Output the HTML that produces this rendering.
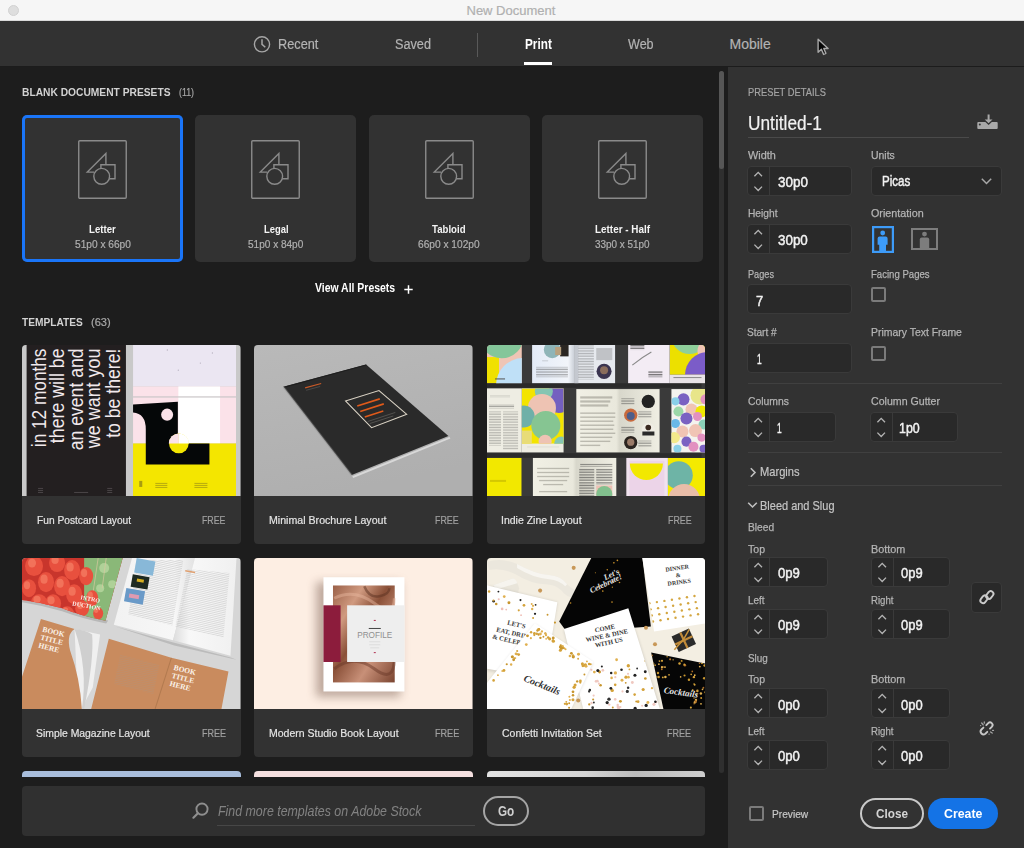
<!DOCTYPE html>
<html><head><meta charset="utf-8">
<style>
*{margin:0;padding:0;box-sizing:border-box}
html,body{width:1024px;height:848px;overflow:hidden;background:#1d1d1d;font-family:"Liberation Sans",sans-serif;position:relative}
.a{position:absolute}
.t{position:absolute;white-space:nowrap;transform-origin:0 0}
.pc{position:absolute;top:115px;width:161px;height:147px;background:#323232;border-radius:5px}
.pc.sel{box-shadow:inset 0 0 0 3px #1a75f8}
.tc{position:absolute;width:218.5px;height:199px;background:#323232;border-radius:4px;overflow:hidden}
.tc svg{position:absolute;left:0;top:0}
.in{position:absolute;height:30px;background:#292929;border:1px solid #3a3a3a;border-radius:4px}
.sp{position:absolute;left:0;top:0;bottom:0;width:23px;border-right:1px solid #3a3a3a;border-radius:4px 0 0 4px}
.sp svg{position:absolute;left:0;top:0}
.cb{position:absolute;width:15px;height:15px;border:2px solid #7b7b7b;border-radius:2px}
.hr{position:absolute;left:748px;width:254px;height:1px;background:#404040}
</style></head><body>
<!-- title bar -->
<div class="a" style="left:0;top:0;width:1024px;height:21px;background:#f6f6f6;border-bottom:1px solid #dadada"></div>
<div class="a" style="left:7.8px;top:5px;width:11px;height:11px;border-radius:50%;background:#dedede;border:1px solid #d2d2d2"></div>
<!-- nav -->
<div class="a" style="left:0;top:21px;width:1024px;height:45px;background:#323232"></div>
<svg class="a" style="left:253px;top:35px" width="18" height="18" viewBox="0 0 18 18"><circle cx="9" cy="9.3" r="7.6" fill="none" stroke="#a6a6a6" stroke-width="1.4"/><path d="M9 4.2V9.4L12.3 12.3" fill="none" stroke="#a6a6a6" stroke-width="1.5"/></svg>
<div class="a" style="left:477px;top:33px;width:1px;height:24px;background:#595959"></div>
<div class="a" style="left:524px;top:62px;width:28px;height:3px;background:#fff"></div>
<svg class="a" style="left:815px;top:37px" width="16" height="22" viewBox="0 0 16 22"><path d="M3.1 2.2V15.3L6.4 12.3L8.6 17.4L10.9 16.4L8.8 11.5H13.1Z" fill="#050505" stroke="#a8a8a8" stroke-width="1.4" stroke-linejoin="round"/></svg>

<!-- left content: presets -->
<div class="pc sel" style="left:22px"><svg class="a" width="51" height="61" viewBox="0 0 51 61" style="left:55px;top:24px"><g fill="none" stroke="#8a8a8a" stroke-width="1.4"><rect x="1.75" y="1.75" width="47.5" height="57.5" rx="1"/><path d="M28.9 25.7V14.5L10.3 33.1H17.2M23.9 29.6V25.7H38V39.8H32.2"/><circle cx="24.7" cy="37.3" r="7.9"/></g></svg></div>
<div class="pc" style="left:195px"><svg class="a" width="51" height="61" viewBox="0 0 51 61" style="left:55px;top:24px"><g fill="none" stroke="#8a8a8a" stroke-width="1.4"><rect x="1.75" y="1.75" width="47.5" height="57.5" rx="1"/><path d="M28.9 25.7V14.5L10.3 33.1H17.2M23.9 29.6V25.7H38V39.8H32.2"/><circle cx="24.7" cy="37.3" r="7.9"/></g></svg></div>
<div class="pc" style="left:368.5px"><svg class="a" width="51" height="61" viewBox="0 0 51 61" style="left:55px;top:24px"><g fill="none" stroke="#8a8a8a" stroke-width="1.4"><rect x="1.75" y="1.75" width="47.5" height="57.5" rx="1"/><path d="M28.9 25.7V14.5L10.3 33.1H17.2M23.9 29.6V25.7H38V39.8H32.2"/><circle cx="24.7" cy="37.3" r="7.9"/></g></svg></div>
<div class="pc" style="left:542px"><svg class="a" width="51" height="61" viewBox="0 0 51 61" style="left:55px;top:24px"><g fill="none" stroke="#8a8a8a" stroke-width="1.4"><rect x="1.75" y="1.75" width="47.5" height="57.5" rx="1"/><path d="M28.9 25.7V14.5L10.3 33.1H17.2M23.9 29.6V25.7H38V39.8H32.2"/><circle cx="24.7" cy="37.3" r="7.9"/></g></svg></div>
<svg class="a" style="left:403.5px;top:284.5px" width="9" height="9" viewBox="0 0 9 9"><path d="M4.5 0.3V8.7M0.3 4.5H8.7" stroke="#fff" stroke-width="1.5"/></svg>

<!-- templates -->
<div class="tc" style="left:22px;top:345px"><svg width="218.5" height="151" viewBox="0 0 218 150" preserveAspectRatio="none">
<rect width="218" height="150" fill="#c9c9c9"/>
<rect x="4.6" y="0" width="99.1" height="150" fill="#231f20"/>
<g font-family="Liberation Sans" font-size="19.5" fill="#f1e9ec" text-anchor="end">
<text transform="translate(23.5,3.5) rotate(-90)" textLength="98" lengthAdjust="spacingAndGlyphs">in 12 months</text>
<text transform="translate(42.3,3.5) rotate(-90)" textLength="94" lengthAdjust="spacingAndGlyphs">there will be</text>
<text transform="translate(61.2,3.5) rotate(-90)" textLength="101" lengthAdjust="spacingAndGlyphs">an event and</text>
<text transform="translate(77.6,3.5) rotate(-90)" textLength="99" lengthAdjust="spacingAndGlyphs">we want you</text>
<text transform="translate(98,3.5) rotate(-90)" textLength="88.7" lengthAdjust="spacingAndGlyphs">to be there!</text>
</g>
<g fill="#5a5557"><rect x="16" y="142" width="5" height=".7"/><rect x="16" y="144" width="5" height=".7"/><rect x="16" y="146" width="5" height=".7"/><rect x="52" y="146" width="14" height=".7"/><rect x="85" y="142" width="5" height=".7"/><rect x="85" y="144" width="5" height=".7"/><rect x="85" y="146" width="5" height=".7"/></g>
<rect x="110.8" y="0" width="102.7" height="41.2" fill="#ebe6f2"/>
<rect x="110.8" y="41.2" width="102.7" height="56.6" fill="#fbe2e9"/>
<rect x="156" y="41.2" width="41.6" height="56.6" fill="#ffffff"/>
<rect x="110.8" y="51" width="102.7" height="1.2" fill="#cbc6c8"/>
<rect x="110.8" y="97.8" width="102.7" height="52.2" fill="#f4e600"/>
<path d="M110.8 59.2L155.5 56.3V97.8H187V118.6H123.5V83.7Q123.5 68 110.8 67Z" fill="#050708"/>
<circle cx="156.5" cy="97.8" r="9.8" fill="#f4e600"/>
<path d="M146.5 97.9A10 10 0 0 1 156.5 87.8V97.9Z" fill="#fbe2e9"/>
<path d="M156.5 87.8A10 10 0 0 1 166.5 97.9H156.5Z" fill="#ffffff"/>
<circle cx="144.8" cy="69.2" r="6" fill="#fbe2e9"/>
<g fill="#a89c10"><rect x="117" y="135" width="3" height="6"/><rect x="133" y="137" width="12" height=".8"/><rect x="133" y="139" width="12" height=".8"/><rect x="133" y="141" width="12" height=".8"/><rect x="172" y="137" width="13" height=".8"/><rect x="172" y="139" width="13" height=".8"/><rect x="172" y="141" width="13" height=".8"/></g>
<g fill="#b9b4c2"><circle cx="178" cy="18" r=".7"/><circle cx="156" cy="25" r=".7"/><circle cx="190" cy="8" r=".7"/><circle cx="145" cy="5" r=".7"/></g>
</svg>
</div>
<div class="tc" style="left:254.3px;top:345px"><svg width="218.5" height="151" viewBox="0 0 218 150" preserveAspectRatio="none">
<defs><linearGradient id="g2" x1="0" y1="0" x2="0.3" y2="1"><stop offset="0" stop-color="#b9b9b9"/><stop offset="1" stop-color="#afafaf"/></linearGradient></defs>
<rect width="218" height="150" fill="url(#g2)"/>
<path d="M98 130.5L195 91.5L196 93L99 132Z" fill="#d8d8d8"/>
<path d="M29.4 41.5L111.8 19.3L194 90.3L97.5 129.2Z" fill="#2a2a2a"/>
<path d="M29.4 41.5L111.8 19.3L112.5 20L30.5 42.5Z" fill="#1e1e1e"/>
<path d="M91.3 55.6L124.7 45.2L152.4 68.8L117.3 82.1Z" fill="none" stroke="#d9d2c4" stroke-width="1"/>
<g stroke="#e05a1a" stroke-width="1.6" fill="none">
<path d="M103 60.5L125.5 53.5"/>
<path d="M106 66L129.5 58.5"/>
<path d="M110.5 71.5L129 65.5"/>
</g>
<g stroke="#5d5b58" stroke-width=".8"><path d="M113.5 76L141 67"/><path d="M115.5 78L139 70.5"/></g>
<path d="M51 42.6L67 38.2" stroke="#c85a28" stroke-width="1.1"/><path d="M29.4 41.5L97.5 129.2" stroke="#8a8a8a" stroke-width="2" opacity=".35"/>
<path d="M52 45L66 41.2" stroke="#555" stroke-width=".7"/>
</svg>
</div>
<div class="tc" style="left:486.8px;top:345px"><svg width="218.5" height="151" viewBox="0 0 218 150" preserveAspectRatio="none">
<defs>
<clipPath id="cA"><rect x="0" y="0" width="34.7" height="37.9"/></clipPath>
<clipPath id="cC"><rect x="182.3" y="0" width="36" height="29.5"/></clipPath>
<clipPath id="cD"><rect x="34.7" y="43.1" width="41.7" height="55"/></clipPath>
<clipPath id="cF"><rect x="184" y="43.8" width="34" height="62.9"/></clipPath>
<clipPath id="cI"><rect x="180.5" y="112.2" width="38" height="38"/></clipPath>
<pattern id="p3t" width="2" height="1.6" patternUnits="userSpaceOnUse"><rect width="2" height=".75" fill="#3a3a3a"/></pattern>
<linearGradient id="gB" x1="0" x2="1"><stop offset="0" stop-color="#e3ebf7"/><stop offset=".85" stop-color="#f2f5fa"/><stop offset="1" stop-color="#c9ced6"/></linearGradient>
<linearGradient id="gE" x1="0" x2="1"><stop offset="0" stop-color="#f1f0e5"/><stop offset=".48" stop-color="#e9e8dc"/><stop offset=".52" stop-color="#d8d7cb"/><stop offset="1" stop-color="#efeee3"/></linearGradient>
</defs>
<rect width="218" height="150" fill="#3a3a3a"/>
<rect x="0" y="38" width="214" height="4.5" fill="#2a2a2a"/>
<rect x="0" y="107.5" width="214" height="4.5" fill="#2c2c2c"/>
<!-- A -->
<g clip-path="url(#cA)"><rect width="35" height="38" fill="#efc5b5"/><rect x="0" y="12" width="12" height="26" fill="#f0e100"/><circle cx="14.6" cy="-8.8" r="22" fill="#84c69a"/><circle cx="36" cy="40" r="27" fill="#bfe0f7"/></g>
<rect x="8" y="33.2" width="10" height="1" fill="#555"/>
<!-- B -->
<rect x="45" y="0" width="42.2" height="37.9" fill="url(#gB)"/>
<rect x="87.2" y="0" width="40.6" height="37.9" fill="#e6e9ee"/>
<rect x="87.2" y="0" width="4" height="37.9" fill="#c4c8cf"/>
<circle cx="65.1" cy="4.8" r="8.4" fill="#8fb5b8"/>
<rect x="73" y="0" width="8.4" height="11.3" fill="#2a2622"/>
<rect x="68" y="2" width="6" height="8" fill="#b9a17e"/>
<g fill="url(#p3t)" opacity=".6"><rect x="49" y="21.7" width="31.7" height="10.3" opacity=".75"/><rect x="91" y="0.3" width="15.6" height="34" opacity=".55"/><rect x="55" y="15" width="6" height="1"/></g>
<circle cx="116.8" cy="26.2" r="7.5" fill="#3b3550"/><circle cx="116.8" cy="25" r="4" fill="#8a6d5c"/>
<rect x="109" y="3" width="16" height="12" fill="#6a6a6a" opacity=".3"/>
<!-- C -->
<rect x="140.8" y="0" width="41.5" height="37.9" fill="#f3ecf4"/>
<g clip-path="url(#cC)"><rect x="182.3" y="0" width="36" height="30" fill="#ece000"/><circle cx="202" cy="-9" r="18" fill="#8fcf9a"/><circle cx="222" cy="6" r="12" fill="#f0c4b4"/><circle cx="220.5" cy="30" r="23" fill="#7b5cc8"/></g>
<rect x="182.3" y="29.5" width="36" height="8.4" fill="#e8e2e6"/>
<g fill="url(#p3t)" opacity=".8"><rect x="143" y="0" width="14" height="5"/><rect x="161" y="26" width="14" height="6"/><rect x="186" y="32" width="28" height="1.2"/></g>
<path d="M145 20Q155 12 164 7" stroke="#8a8a8a" stroke-width="1.2" fill="none"/>
<!-- D -->
<rect x="0" y="43.1" width="34.7" height="63.6" fill="#eeede3"/>
<rect x="34.7" y="43.1" width="41.7" height="63.6" fill="#eeede3"/>
<g clip-path="url(#cD)"><rect x="34.7" y="43.1" width="42" height="55" fill="#f3e400"/><circle cx="71.6" cy="53.5" r="14" fill="#7460c0"/><circle cx="56.7" cy="46.3" r="9" fill="#85c5b2"/><circle cx="54.8" cy="62.6" r="14" fill="#eec3b3"/><circle cx="36.6" cy="71" r="11" fill="#6fb0a8"/><rect x="34.7" y="85" width="10" height="14" fill="#e8dc78"/><circle cx="58.7" cy="80" r="14.5" fill="#86c592"/><circle cx="58" cy="95.6" r="6.5" fill="#eec3b3"/><circle cx="74" cy="98" r="7" fill="#85c5b2"/></g>
<g fill="url(#p3t)" opacity=".6"><rect x="2" y="59" width="25" height="4" opacity=".8"/><rect x="2" y="66" width="12" height="34" opacity=".55"/><rect x="16" y="66" width="15" height="38" opacity=".5"/><rect x="3" y="50" width="20" height="2.5" opacity=".35"/><rect x="40" y="101" width="32" height="1" opacity=".5"/></g>
<!-- E -->
<rect x="89.1" y="43.8" width="83.1" height="62.9" fill="url(#gE)"/>
<g fill="#8a887e" opacity=".5"><rect x="93" y="51" width="32" height="2.2"/><rect x="93" y="55" width="30" height="2.2"/><rect x="93" y="59" width="28" height="2.2"/><rect x="93" y="67" width="35" height="1.4"/><rect x="93" y="71" width="35" height="1.4"/><rect x="93" y="75" width="33" height="1.4"/><rect x="93" y="79" width="34" height="1.4"/><rect x="93" y="83" width="33" height="1.4"/><rect x="93" y="87" width="35" height="1.4"/><rect x="93" y="91" width="32" height="1.4"/><rect x="93" y="95" width="30" height="1.4"/><rect x="93" y="99" width="20" height="1.4"/></g>
<g fill="url(#p3t)" opacity=".5"><rect x="134" y="53" width="13" height="6"/><rect x="151" y="66" width="13" height="6"/><rect x="134" y="81" width="13" height="6"/><rect x="151" y="95" width="13" height="6"/></g>
<circle cx="160.9" cy="56.1" r="6.6" fill="#222"/><circle cx="143.4" cy="69.7" r="6.6" fill="#c76a3e"/><circle cx="143.4" cy="70.5" r="4" fill="#4d5d8a"/><circle cx="160.9" cy="84" r="6.6" fill="#efede4"/><path d="M155 86h12v4h-12z" fill="#2a2a2a"/><circle cx="160.9" cy="82" r="2.8" fill="#3a2a20"/><circle cx="143.4" cy="96.9" r="6.6" fill="#2b2420"/><circle cx="143.4" cy="96.5" r="3.6" fill="#9a7a68"/>
<!-- F -->
<rect x="184" y="43.8" width="34" height="62.9" fill="#f4f3ee"/>
<g clip-path="url(#cF)">
<circle cx="212" cy="50" r="9" fill="#e8e58a"/><circle cx="196" cy="54" r="6" fill="#7a62c2"/><circle cx="218" cy="54" r="5" fill="#e290c0"/><circle cx="188" cy="56" r="4" fill="#8ad0e8"/>
<circle cx="204" cy="64" r="6" fill="#f0c4b4"/><circle cx="214" cy="66" r="6" fill="#f0e800"/><circle cx="191" cy="66" r="5" fill="#9cd8a8"/>
<circle cx="199" cy="73" r="6" fill="#7a62c2"/><circle cx="210" cy="71" r="4.5" fill="#e290c0"/><circle cx="188" cy="78" r="4.5" fill="#6ab8e8"/><circle cx="216" cy="79" r="5" fill="#8ad0b8"/>
<circle cx="195" cy="86" r="6" fill="#f0c4b4"/><circle cx="208" cy="85" r="6.5" fill="#f0c4b4"/><circle cx="187" cy="92" r="5.5" fill="#f3e98a"/><circle cx="214" cy="92" r="4" fill="#e290c0"/>
<circle cx="199" cy="96" r="5" fill="#7a62c2"/><circle cx="206" cy="101" r="5" fill="#e290c0"/><circle cx="190" cy="103" r="4" fill="#8ad0e8"/><circle cx="216" cy="103" r="4" fill="#7a62c2"/>
</g>
<!-- G -->
<rect x="0" y="112.2" width="34.4" height="38" fill="#f2e800"/>
<rect x="3" y="134" width="16" height="2" fill="#d4c800"/>
<!-- H -->
<rect x="45.8" y="112.2" width="83.2" height="38" fill="url(#gE)"/>
<g fill="#8a887e" opacity=".5"><rect x="50" y="122" width="32" height="1.3"/><rect x="50" y="126" width="32" height="1.3"/><rect x="50" y="130" width="32" height="1.3"/><rect x="52" y="134" width="28" height="1.3"/><rect x="56" y="138" width="20" height="1.3"/><rect x="52" y="145" width="28" height="1.3"/></g>
<g fill="url(#p3t)" opacity=".6"><rect x="93" y="118" width="32" height="3"/><rect x="92" y="123" width="15" height="27"/><rect x="109" y="123" width="16" height="16"/></g>
<rect x="109" y="139.5" width="16" height="11" fill="#ecc0b4"/><circle cx="117" cy="148" r="8" fill="#82c08e"/>
<!-- I -->
<rect x="139" y="112.2" width="41.5" height="38" fill="#f0e2ee"/>
<rect x="142" y="115" width="35" height="35" fill="#ecd4e8"/>
<path d="M142.5 117.6H175.5A16.5 16.5 0 0 1 142.5 117.6Z" fill="#f2e800"/>
<g clip-path="url(#cI)"><rect x="180.5" y="112.2" width="38" height="38" fill="#f4ea00"/><circle cx="191.3" cy="129.4" r="14" fill="#6eb4a6"/><circle cx="196.6" cy="154" r="16" fill="#e9bda8"/></g>
</svg>
</div>
<div class="tc" style="left:22px;top:558px"><svg width="218.5" height="151" viewBox="0 0 218 150" preserveAspectRatio="none">
<defs>
<clipPath id="c4s"><path d="M0 0H100.5L83.3 62.4Q60 58 40 50Q20 44 0 41.6Z"/></clipPath>
<linearGradient id="g4l" x1="0" x2="1"><stop offset="0" stop-color="#f2f2f2"/><stop offset=".75" stop-color="#f7f7f7"/><stop offset="1" stop-color="#e2e2e2"/></linearGradient><linearGradient id="g4r" x1="0" x2="1"><stop offset="0" stop-color="#dcdcdc"/><stop offset=".25" stop-color="#f8f8f8"/><stop offset="1" stop-color="#f0f0f0"/></linearGradient><pattern id="p4t" width="3" height="1.8" patternUnits="userSpaceOnUse" patternTransform="rotate(12)"><rect width="3" height=".8" fill="#9a9a9a"/></pattern>
</defs>
<rect width="218" height="150" fill="#d6d6d6"/>
<!-- strawberries -->
<path d="M0 44Q20 47 40 53Q62 61 84 65L86 62Q60 58 40 50Q20 44 0 41.6Z" fill="#b8b8b8"/>
<g clip-path="url(#c4s)">
<rect width="101" height="63" fill="#c8352c"/>
<path d="M62 0H101L84 63L62 60Z" fill="#8ab878"/>
<g fill="#b8d8a0" opacity=".8"><circle cx="82" cy="10" r="5"/><circle cx="90" cy="26" r="4"/><circle cx="78" cy="30" r="4"/></g>
<path d="M76 0L70 40M84 0L80 30" stroke="#d8c8a0" stroke-width="1" opacity=".7"/>
<ellipse cx="12" cy="8" rx="9" ry="10" fill="#e8503e"/><ellipse cx="10" cy="5" rx="4.0" ry="4.5" fill="#f47a62" opacity=".8"/><ellipse cx="35" cy="5" rx="8" ry="9" fill="#e8503e"/><ellipse cx="33" cy="2" rx="3.6" ry="4.0" fill="#f47a62" opacity=".8"/><ellipse cx="50" cy="12" rx="8" ry="10" fill="#e8503e"/><ellipse cx="48" cy="9" rx="3.6" ry="4.5" fill="#f47a62" opacity=".8"/><ellipse cx="64" cy="18" rx="7" ry="9" fill="#e8503e"/><ellipse cx="62" cy="15" rx="3.1" ry="4.0" fill="#f47a62" opacity=".8"/><ellipse cx="24" cy="24" rx="8" ry="10" fill="#e8503e"/><ellipse cx="22" cy="21" rx="3.6" ry="4.5" fill="#f47a62" opacity=".8"/><ellipse cx="40" cy="28" rx="8" ry="10" fill="#e8503e"/><ellipse cx="38" cy="25" rx="3.6" ry="4.5" fill="#f47a62" opacity=".8"/><ellipse cx="7" cy="30" rx="7" ry="9" fill="#e8503e"/><ellipse cx="5" cy="27" rx="3.1" ry="4.0" fill="#f47a62" opacity=".8"/><ellipse cx="17" cy="44" rx="8" ry="8" fill="#e8503e"/><ellipse cx="15" cy="41" rx="3.6" ry="3.6" fill="#f47a62" opacity=".8"/><ellipse cx="31" cy="45" rx="8" ry="9" fill="#e8503e"/><ellipse cx="29" cy="42" rx="3.6" ry="4.0" fill="#f47a62" opacity=".8"/><ellipse cx="52" cy="36" rx="8" ry="10" fill="#e8503e"/><ellipse cx="50" cy="33" rx="3.6" ry="4.5" fill="#f47a62" opacity=".8"/><ellipse cx="60" cy="50" rx="7" ry="8" fill="#e8503e"/><ellipse cx="58" cy="47" rx="3.1" ry="3.6" fill="#f47a62" opacity=".8"/><ellipse cx="45" cy="55" rx="7" ry="7" fill="#e8503e"/><ellipse cx="43" cy="52" rx="3.1" ry="3.1" fill="#f47a62" opacity=".8"/><ellipse cx="70" cy="40" rx="6" ry="8" fill="#e8503e"/><ellipse cx="68" cy="37" rx="2.7" ry="3.6" fill="#f47a62" opacity=".8"/><ellipse cx="76" cy="55" rx="5" ry="6" fill="#e8503e"/><ellipse cx="74" cy="52" rx="2.2" ry="2.7" fill="#f47a62" opacity=".8"/><ellipse cx="2" cy="48" rx="5" ry="6" fill="#e8503e"/><ellipse cx="0" cy="45" rx="2.2" ry="2.7" fill="#f47a62" opacity=".8"/>
<g font-family="Liberation Serif" font-weight="bold" font-size="6" fill="#fff" opacity=".9"><text x="58" y="41" transform="rotate(10 58 41)">INTRO</text><text x="50" y="47" transform="rotate(10 50 47)">DUCTION</text></g>
</g>
<!-- white magazine spread top right -->
<path d="M93 68L151 84L209 99L214 101L152 87Z" fill="#b4b4b4" opacity=".8"/>
<path d="M91.6 66.2L109.8 0H172.5L150.7 81.6Z" fill="url(#g4l)"/>
<path d="M172.5 0H214L208 97L150.7 81.6Z" fill="url(#g4r)"/>
<path d="M116 2L161 2L150 67L106 56Z" fill="url(#p4t)" opacity=".35"/>
<path d="M165 11L207 15L201 79L153 68Z" fill="url(#p4t)" opacity=".32"/>
<g transform="rotate(10 118 20)"><rect x="111" y="1" width="19" height="14.5" fill="#88b8d8"/><rect x="110" y="17.5" width="17" height="12.5" fill="#1e2a22"/><rect x="115" y="21" width="7" height="3" fill="#d8b020"/><rect x="106" y="32" width="19" height="13.5" fill="#6a9ac8"/><rect x="110" y="37" width="10" height="4" fill="#e09ab0"/></g>
<rect x="163" y="12" width="10" height="1.5" fill="#e0a070" transform="rotate(10 163 12)"/>
<!-- peeled page -->
<path d="M52.4 70.6L77.9 76L70.6 128.7Q64 140 60 150H56Z" fill="#f0f0f0"/>
<path d="M52.4 70.6Q64 72 70 76Q72 100 62 150H59.7Q66 110 52.4 70.6Z" fill="#cfcfcf"/>
<!-- tan cover bottom-left -->
<path d="M18.9 60.6L52.4 70.6Q44 76 48 92Q58 120 59.7 150H0V118Z" fill="#c98b5e"/>
<g font-family="Liberation Serif" font-weight="bold" font-size="7.5" fill="#fbf3ea"><text x="20" y="73" transform="rotate(14 20 73)">BOOK</text><text x="18" y="81" transform="rotate(14 18 81)">TITLE</text><text x="16" y="89" transform="rotate(14 16 89)">HERE</text></g>
<!-- tan spread bottom right -->
<path d="M86.6 80.2L149 99.2L206 112.8L199 150H69Z" fill="#c98b5e"/>
<path d="M149 99.2L132.8 150" stroke="#b27a50" stroke-width="1"/>
<path d="M98 96L137 106L131 135L92 125Z" fill="url(#p4t)" opacity=".25"/>
<g font-family="Liberation Serif" font-weight="bold" font-size="7.5" fill="#fbf3ea"><text x="151" y="111" transform="rotate(14 151 111)">BOOK</text><text x="149" y="119" transform="rotate(14 149 119)">TITLE</text><text x="147" y="127" transform="rotate(14 147 127)">HERE</text></g>
</svg>
</div>
<div class="tc" style="left:254.3px;top:558px"><svg width="218.5" height="151" viewBox="0 0 218 150" preserveAspectRatio="none">
<defs>
<filter id="f5" x="-50%" y="-50%" width="200%" height="200%"><feGaussianBlur stdDeviation="5"/></filter>
<linearGradient id="g5p" x1="0" y1="0" x2="1" y2="1"><stop offset="0" stop-color="#9a6048"/><stop offset=".25" stop-color="#d09a80"/><stop offset=".45" stop-color="#8a5038"/><stop offset=".7" stop-color="#c89078"/><stop offset="1" stop-color="#7a4430"/></linearGradient>
</defs>
<rect width="218" height="150" fill="#fdeee3"/>
<rect x="62" y="24" width="84" height="114" fill="#8a7064" opacity=".55" filter="url(#f5)"/>
<rect x="69.3" y="19.1" width="80.8" height="113.5" fill="#ffffff"/>
<rect x="78.8" y="27.3" width="61.6" height="96.3" fill="url(#g5p)"/>
<path d="M80 40Q100 30 120 45T140 40" stroke="#e8b8a0" stroke-width="3" fill="none" opacity=".45"/><path d="M110 28Q115 40 125 38T135 30" stroke="#5a3020" stroke-width="2.5" fill="none" opacity=".5"/>
<path d="M80 110Q100 95 120 110T140 100" stroke="#6a3828" stroke-width="3" fill="none" opacity=".5"/>
<rect x="69.3" y="47" width="17.1" height="56.3" fill="#8c1c3c"/>
<rect x="92.9" y="47" width="57.2" height="56.3" fill="#eeeeee"/>
<text x="120.5" y="79.6" font-family="Liberation Sans" font-size="8.5" fill="#909090" text-anchor="middle" textLength="35" lengthAdjust="spacingAndGlyphs">PROFILE</text>
<rect x="114.5" y="69.5" width="12" height="1" fill="#444"/>
<rect x="119.5" y="61.5" width="2" height="1" fill="#b03050"/>
<rect x="119.5" y="93.5" width="2" height="1" fill="#b03050"/>
<g fill="#d0d0d0"><rect x="115" y="83" width="11" height=".6"/><rect x="115" y="86" width="11" height=".6"/><rect x="116" y="89" width="9" height=".6"/></g>
</svg>
</div>
<div class="tc" style="left:486.8px;top:558px"><svg width="218.5" height="151" viewBox="0 0 218 150" preserveAspectRatio="none">
<defs><filter id="f6" x="-20%" y="-20%" width="140%" height="140%"><feGaussianBlur stdDeviation="1.5"/></filter>
<clipPath id="c6c"><path d="M76.8 70.6L141 49.8L172.5 150H96Z"/></clipPath><clipPath id="c6k"><path d="M47.7 64.7L106 103L84 150H0V124Z"/></clipPath><clipPath id="c6b"><path d="M163.8 93.8L219 105V150H176Z"/></clipPath><clipPath id="c6d"><path d="M155 0H218V65L166.7 72.9Z"/></clipPath></defs>
<rect width="218" height="150" fill="#f3eee2"/>
<path d="M0 4Q14 -1 30 6Q48 16 62 17Q74 18 80 26Q86 32 92 33L88 39Q80 40 74 32Q68 26 58 26Q44 26 28 16Q14 9 2 12Z" fill="#ebe7dd"/>
<path d="M30 6Q48 16 62 17Q74 18 80 26L78 28Q72 22 62 21Q46 20 30 10Z" fill="#f7f5f0"/>
<path d="M6 27L26 20Q30 22 32 30L30 40L12 46Q8 38 6 27Z" fill="#e9e5da"/>
<path d="M6 27L26 20Q30 22 30 25L10 31Z" fill="#f6f4ee"/>
<path d="M12 46L30 40L32 43L14 49Z" fill="#b8b2a4" opacity=".7"/>
<path d="M0 30L2.6 27.9L70.2 44L58 120L0 112Z" fill="#000" opacity=".12" filter="url(#f6)"/>
<path d="M0 27L2.6 27.9L70.2 44L58 120L0 110Z" fill="#ffffff"/>
<circle cx="2.1" cy="33.2" r="1.24" fill="#d4a23a"/><circle cx="44.6" cy="45.6" r="0.98" fill="#e0b050"/><circle cx="36.9" cy="47.0" r="1.36" fill="#d4a23a"/><circle cx="6.6" cy="42.9" r="1.25" fill="#222"/><circle cx="19.2" cy="51.2" r="0.90" fill="#f0c0b8"/><circle cx="21.9" cy="44.5" r="1.48" fill="#c8962e"/><circle cx="33.4" cy="41.8" r="1.05" fill="#222"/><circle cx="48.5" cy="46.5" r="0.91" fill="#222"/><circle cx="60.4" cy="56.3" r="0.95" fill="#c8962e"/><circle cx="46.0" cy="59.6" r="1.04" fill="#d4a23a"/><circle cx="47.9" cy="55.4" r="1.12" fill="#222"/><circle cx="15.1" cy="50.6" r="1.34" fill="#f0c0b8"/><circle cx="6.5" cy="42.2" r="1.02" fill="#c8962e"/><circle cx="17.2" cy="38.3" r="1.36" fill="#e0b050"/><circle cx="9.2" cy="45.6" r="1.27" fill="#c8962e"/><circle cx="34.0" cy="56.8" r="0.93" fill="#f0c0b8"/><circle cx="11.7" cy="41.0" r="1.03" fill="#f0c0b8"/><circle cx="11.4" cy="33.4" r="0.94" fill="#222"/><circle cx="31.7" cy="52.0" r="1.09" fill="#d4a23a"/><circle cx="67.8" cy="64.1" r="1.10" fill="#c8962e"/><circle cx="45.1" cy="50.6" r="1.18" fill="#e0b050"/><circle cx="45.9" cy="47.5" r="1.12" fill="#e0b050"/>
<g font-family="Liberation Serif" font-weight="bold" font-size="6.5" fill="#3a3a3a"><text x="20" y="66" transform="rotate(13 20 66)">LET'S</text><text x="9" y="73" transform="rotate(13 9 73)">EAT, DRINK</text><text x="5" y="80" transform="rotate(13 5 80)">&amp; CELEBR</text></g>
<path d="M72 63L104 0H155L163.5 68L80 74Z" fill="#050505"/>
<circle cx="124.7" cy="43.8" r="0.81" fill="#c8902a"/><circle cx="108.1" cy="14.7" r="0.50" fill="#c8902a"/><circle cx="125.1" cy="29.0" r="0.64" fill="#c8902a"/><circle cx="125.2" cy="23.3" r="0.87" fill="#c8902a"/><circle cx="131.3" cy="13.9" r="0.86" fill="#c8902a"/><circle cx="113.1" cy="27.5" r="0.66" fill="#c8902a"/><circle cx="126.6" cy="4.8" r="0.81" fill="#c8902a"/><circle cx="110.9" cy="28.4" r="0.88" fill="#c8902a"/><circle cx="120.0" cy="11.6" r="0.74" fill="#c8902a"/><circle cx="115.5" cy="32.8" r="0.83" fill="#c8902a"/><circle cx="122.2" cy="16.9" r="0.62" fill="#c8902a"/><circle cx="83.4" cy="44.7" r="0.81" fill="#c8902a"/><circle cx="130.1" cy="2.3" r="0.84" fill="#c8902a"/><circle cx="132.2" cy="24.3" r="0.80" fill="#c8902a"/>
<g font-family="Liberation Serif" font-style="italic" font-weight="bold" font-size="8" fill="#e8e8e8"><text x="118" y="22" transform="rotate(-25 118 22)">Let's</text><text x="104" y="35" transform="rotate(-25 104 35)">Celebrate!</text></g>
<path d="M155 0H218V65L166.7 72.9Z" fill="#ffffff"/>
<g clip-path="url(#c6d)"><circle cx="162.0" cy="45.0" r="1.2" fill="#d4a640"/><circle cx="163.2" cy="51.0" r="1.2" fill="#d4a640"/><circle cx="164.4" cy="57.0" r="1.2" fill="#d4a640"/><circle cx="165.6" cy="63.0" r="1.2" fill="#d4a640"/><circle cx="169.5" cy="43.8" r="1.2" fill="#d4a640"/><circle cx="170.7" cy="49.8" r="1.2" fill="#d4a640"/><circle cx="171.9" cy="55.8" r="1.2" fill="#d4a640"/><circle cx="173.1" cy="61.8" r="1.2" fill="#d4a640"/><circle cx="177.0" cy="42.6" r="1.2" fill="#d4a640"/><circle cx="178.2" cy="48.6" r="1.2" fill="#d4a640"/><circle cx="179.4" cy="54.6" r="1.2" fill="#d4a640"/><circle cx="180.6" cy="60.6" r="1.2" fill="#d4a640"/><circle cx="184.5" cy="41.4" r="1.2" fill="#d4a640"/><circle cx="185.7" cy="47.4" r="1.2" fill="#d4a640"/><circle cx="186.9" cy="53.4" r="1.2" fill="#d4a640"/><circle cx="188.1" cy="59.4" r="1.2" fill="#d4a640"/><circle cx="192.0" cy="40.2" r="1.2" fill="#d4a640"/><circle cx="193.2" cy="46.2" r="1.2" fill="#d4a640"/><circle cx="194.4" cy="52.2" r="1.2" fill="#d4a640"/><circle cx="195.6" cy="58.2" r="1.2" fill="#d4a640"/><circle cx="199.5" cy="39.0" r="1.2" fill="#d4a640"/><circle cx="200.7" cy="45.0" r="1.2" fill="#d4a640"/><circle cx="201.9" cy="51.0" r="1.2" fill="#d4a640"/><circle cx="203.1" cy="57.0" r="1.2" fill="#d4a640"/><circle cx="207.0" cy="37.8" r="1.2" fill="#d4a640"/><circle cx="208.2" cy="43.8" r="1.2" fill="#d4a640"/><circle cx="209.4" cy="49.8" r="1.2" fill="#d4a640"/><circle cx="210.6" cy="55.8" r="1.2" fill="#d4a640"/></g>
<g font-family="Liberation Serif" font-weight="bold" font-size="6" fill="#3a3a3a" text-anchor="middle"><text x="190" y="12" transform="rotate(-8 190 12)">DINNER</text><text x="191" y="19" transform="rotate(-8 191 19)">&amp;</text><text x="192" y="26" transform="rotate(-8 192 26)">DRINKS</text></g>
<circle cx="86.5" cy="9.8" r="2" fill="#c89858"/><circle cx="53" cy="32.4" r="2" fill="#c89858"/><circle cx="158.6" cy="69.3" r="2" fill="#c89858"/><circle cx="167.6" cy="85.6" r="2" fill="#c89858"/><circle cx="91" cy="141.5" r="2" fill="#c89858"/>
<g transform="rotate(-25 197 82)"><rect x="187" y="73" width="19" height="17" fill="#2a2a2a"/><rect x="195.5" y="73" width="2.2" height="17" fill="#c08a3a"/><rect x="187" y="80.5" width="19" height="2.2" fill="#c08a3a"/><path d="M196 81L184 86M196 81L206 74" stroke="#c8923a" stroke-width="1.5"/></g>
<path d="M76.8 71.6L141 50.8L173 149L150 150H96Z" fill="#000" opacity=".15" filter="url(#f6)"/>
<path d="M76.8 70.6L141 49.8L172.5 150H96Z" fill="#ffffff"/><g clip-path="url(#c6c)">
<circle cx="110.6" cy="122.7" r="0.94" fill="#f0c8c0"/><circle cx="106.6" cy="143.6" r="0.95" fill="#333"/><circle cx="102.6" cy="131.1" r="1.23" fill="#222"/><circle cx="138.6" cy="118.4" r="1.56" fill="#d4a23a"/><circle cx="115.6" cy="111.6" r="1.37" fill="#f0c8c0"/><circle cx="141.0" cy="107.1" r="1.68" fill="#d4a23a"/><circle cx="160.1" cy="105.8" r="1.24" fill="#e0b050"/><circle cx="140.0" cy="132.5" r="1.55" fill="#333"/><circle cx="140.7" cy="115.1" r="1.05" fill="#f0c8c0"/><circle cx="149.8" cy="109.8" r="0.95" fill="#333"/><circle cx="147.6" cy="116.5" r="1.52" fill="#222"/><circle cx="164.6" cy="129.3" r="1.14" fill="#e0b050"/><circle cx="148.9" cy="142.6" r="0.97" fill="#c8962e"/><circle cx="134.7" cy="121.5" r="1.48" fill="#e0b050"/><circle cx="168.6" cy="120.9" r="1.31" fill="#d4a23a"/><circle cx="123.9" cy="114.2" r="1.24" fill="#222"/><circle cx="105.4" cy="148.7" r="1.36" fill="#333"/><circle cx="122.0" cy="145.6" r="1.18" fill="#f0c8c0"/><circle cx="155.8" cy="130.6" r="1.57" fill="#d4a23a"/><circle cx="133.2" cy="148.0" r="0.95" fill="#f0c8c0"/><circle cx="121.7" cy="140.2" r="1.69" fill="#333"/><circle cx="119.9" cy="143.6" r="1.61" fill="#222"/><circle cx="165.8" cy="123.8" r="1.03" fill="#e0b050"/><circle cx="104.1" cy="111.1" r="1.13" fill="#f0c8c0"/><circle cx="127.9" cy="140.4" r="1.30" fill="#f0c8c0"/><circle cx="128.1" cy="114.2" r="1.61" fill="#e0b050"/><circle cx="160.5" cy="143.5" r="1.47" fill="#e0b050"/><circle cx="147.8" cy="149.5" r="1.67" fill="#222"/><circle cx="112.3" cy="113.3" r="1.43" fill="#c8962e"/><circle cx="158.2" cy="102.3" r="1.11" fill="#c8962e"/><circle cx="129.3" cy="101.1" r="1.39" fill="#e0b050"/><circle cx="108.8" cy="122.5" r="1.31" fill="#f0c8c0"/><circle cx="147.3" cy="135.7" r="1.27" fill="#d4a23a"/><circle cx="166.6" cy="145.4" r="1.54" fill="#f0c8c0"/><circle cx="127.9" cy="126.0" r="1.29" fill="#d4a23a"/><circle cx="113.3" cy="126.3" r="1.25" fill="#c8962e"/><circle cx="142.1" cy="110.7" r="0.90" fill="#d4a23a"/><circle cx="107.1" cy="113.3" r="1.39" fill="#e0b050"/><circle cx="114.6" cy="107.8" r="1.02" fill="#222"/><circle cx="124.3" cy="119.1" r="1.28" fill="#e0b050"/><circle cx="134.2" cy="111.0" r="1.28" fill="#222"/><circle cx="110.1" cy="122.1" r="1.17" fill="#f0c8c0"/><circle cx="158.0" cy="119.7" r="1.31" fill="#c8962e"/><circle cx="166.6" cy="116.5" r="1.02" fill="#e0b050"/><circle cx="101.9" cy="132.6" r="1.14" fill="#333"/><circle cx="106.4" cy="136.7" r="1.11" fill="#f0c8c0"/><circle cx="111.7" cy="124.8" r="1.08" fill="#f0c8c0"/><circle cx="135.2" cy="132.5" r="1.08" fill="#f0c8c0"/><circle cx="168.9" cy="143.2" r="1.06" fill="#f0c8c0"/><circle cx="128.0" cy="118.4" r="1.08" fill="#f0c8c0"/><circle cx="124.9" cy="131.5" r="1.69" fill="#d4a23a"/><circle cx="133.1" cy="142.4" r="1.45" fill="#c8962e"/><circle cx="131.3" cy="148.5" r="1.69" fill="#f0c8c0"/><circle cx="125.5" cy="148.4" r="0.98" fill="#c8962e"/><circle cx="123.6" cy="129.5" r="1.40" fill="#222"/><circle cx="158.8" cy="146.5" r="1.63" fill="#222"/><circle cx="145.0" cy="123.7" r="1.43" fill="#f0c8c0"/><circle cx="154.8" cy="146.8" r="1.06" fill="#f0c8c0"/><circle cx="130.4" cy="146.0" r="1.17" fill="#f0c8c0"/><circle cx="168.0" cy="142.8" r="1.27" fill="#222"/><circle cx="105.9" cy="140.6" r="1.04" fill="#c8962e"/><circle cx="110.6" cy="111.8" r="1.55" fill="#222"/><circle cx="157.9" cy="113.0" r="1.43" fill="#222"/><circle cx="138.4" cy="124.0" r="0.92" fill="#c8962e"/><circle cx="150.8" cy="142.7" r="1.32" fill="#d4a23a"/><circle cx="130.4" cy="147.7" r="1.06" fill="#f0c8c0"/><circle cx="102.0" cy="145.5" r="1.13" fill="#c8962e"/><circle cx="141.1" cy="118.4" r="1.34" fill="#e0b050"/><circle cx="104.3" cy="144.0" r="1.18" fill="#f0c8c0"/><circle cx="140.8" cy="129.0" r="1.24" fill="#333"/>
</g><g font-family="Liberation Serif" font-weight="bold" font-size="6.5" fill="#3a3a3a" text-anchor="middle"><text x="118" y="72" transform="rotate(-12 118 72)">COME</text><text x="120" y="79" transform="rotate(-12 120 79)">WINE &amp; DINE</text><text x="122" y="86" transform="rotate(-12 122 86)">WITH US</text></g>
<path d="M163.8 93.8L219 105V150H176Z" fill="#060606"/><g clip-path="url(#c6b)">
<circle cx="201.5" cy="121.0" r="1.23" fill="#c8962e"/><circle cx="214.5" cy="104.4" r="1.12" fill="#c8962e"/><circle cx="206.6" cy="144.8" r="0.72" fill="#b07028"/><circle cx="174.4" cy="110.5" r="0.93" fill="#b07028"/><circle cx="213.5" cy="144.9" r="0.90" fill="#e0b050"/><circle cx="213.4" cy="134.5" r="1.25" fill="#e0b050"/><circle cx="160.2" cy="112.6" r="1.08" fill="#d4a23a"/><circle cx="161.4" cy="101.2" r="1.27" fill="#b07028"/><circle cx="205.8" cy="118.4" r="0.78" fill="#b07028"/><circle cx="170.6" cy="114.2" r="1.19" fill="#c8962e"/><circle cx="206.5" cy="139.1" r="0.75" fill="#c8962e"/><circle cx="182.7" cy="100.7" r="1.09" fill="#b07028"/><circle cx="192.1" cy="104.8" r="1.23" fill="#d4a23a"/><circle cx="209.0" cy="135.5" r="0.97" fill="#c8962e"/><circle cx="167.7" cy="106.5" r="0.84" fill="#d4a23a"/><circle cx="204.8" cy="112.7" r="0.86" fill="#b07028"/><circle cx="215.9" cy="128.9" r="0.90" fill="#b07028"/><circle cx="174.6" cy="102.1" r="1.09" fill="#d4a23a"/><circle cx="208.5" cy="141.0" r="1.20" fill="#e0b050"/><circle cx="203.4" cy="148.6" r="1.05" fill="#d4a23a"/><circle cx="181.6" cy="116.1" r="0.86" fill="#d4a23a"/><circle cx="166.1" cy="109.4" r="0.83" fill="#e0b050"/><circle cx="179.7" cy="98.0" r="0.72" fill="#c8962e"/><circle cx="207.3" cy="116.4" r="0.92" fill="#e0b050"/><circle cx="164.5" cy="96.9" r="0.99" fill="#b07028"/><circle cx="165.9" cy="105.0" r="1.08" fill="#d4a23a"/><circle cx="217.8" cy="133.4" r="0.95" fill="#d4a23a"/><circle cx="207.5" cy="143.2" r="1.30" fill="#e0b050"/><circle cx="197.4" cy="106.5" r="1.27" fill="#b07028"/><circle cx="212.3" cy="107.9" r="0.94" fill="#e0b050"/><circle cx="209.9" cy="132.0" r="1.25" fill="#d4a23a"/><circle cx="193.2" cy="118.1" r="0.80" fill="#e0b050"/><circle cx="176.4" cy="108.3" r="0.77" fill="#b07028"/><circle cx="203.7" cy="115.6" r="0.88" fill="#d4a23a"/><circle cx="216.7" cy="119.4" r="1.24" fill="#c8962e"/><circle cx="197.1" cy="116.7" r="1.07" fill="#c8962e"/><circle cx="207.2" cy="125.9" r="0.93" fill="#d4a23a"/><circle cx="168.7" cy="117.8" r="0.82" fill="#d4a23a"/><circle cx="208.2" cy="142.5" r="1.17" fill="#b07028"/><circle cx="206.6" cy="125.2" r="0.81" fill="#d4a23a"/><circle cx="213.7" cy="139.0" r="0.97" fill="#c8962e"/><circle cx="206.5" cy="118.3" r="1.18" fill="#d4a23a"/><circle cx="162.4" cy="99.0" r="0.89" fill="#d4a23a"/><circle cx="217.1" cy="106.8" r="1.21" fill="#d4a23a"/><circle cx="171.2" cy="118.2" r="1.27" fill="#c8962e"/><circle cx="215.0" cy="130.5" r="0.85" fill="#e0b050"/><circle cx="212.0" cy="104.6" r="0.79" fill="#b07028"/><circle cx="172.1" cy="102.4" r="0.89" fill="#d4a23a"/><circle cx="171.5" cy="105.5" r="0.87" fill="#e0b050"/><circle cx="211.9" cy="102.3" r="0.77" fill="#d4a23a"/><circle cx="196.9" cy="105.8" r="1.03" fill="#d4a23a"/><circle cx="174.6" cy="108.5" r="1.14" fill="#e0b050"/><circle cx="175.4" cy="118.6" r="0.92" fill="#d4a23a"/><circle cx="185.7" cy="101.2" r="0.73" fill="#e0b050"/><circle cx="178.0" cy="118.2" r="1.26" fill="#e0b050"/><circle cx="205.2" cy="131.3" r="0.95" fill="#e0b050"/><circle cx="211.8" cy="101.1" r="0.70" fill="#e0b050"/><circle cx="177.6" cy="108.4" r="0.95" fill="#e0b050"/><circle cx="194.2" cy="102.2" r="0.98" fill="#c8962e"/><circle cx="160.8" cy="113.7" r="0.97" fill="#d4a23a"/>
</g><text x="176" y="134" transform="rotate(8 176 134)" font-family="Liberation Serif" font-style="italic" font-weight="bold" font-size="9" fill="#e8e8e8">Cocktails</text>
<path d="M47.7 65.7L106 104L84 150H0V125Z" fill="#000" opacity=".12" filter="url(#f6)"/>
<path d="M47.7 64.7L106 103L84 150H0V124Z" fill="#ffffff"/><g clip-path="url(#c6k)">
<circle cx="29.5" cy="95.4" r="1.27" fill="#d4a23a"/><circle cx="16.9" cy="111.7" r="1.44" fill="#d4a23a"/><circle cx="77.1" cy="89.7" r="1.13" fill="#e0b050"/><circle cx="87.9" cy="126.2" r="1.52" fill="#d4a23a"/><circle cx="65.8" cy="81.9" r="1.29" fill="#d4a23a"/><circle cx="84.2" cy="94.7" r="1.38" fill="#c8962e"/><circle cx="82.7" cy="141.1" r="1.07" fill="#e0b050"/><circle cx="6.6" cy="121.6" r="1.29" fill="#d4a23a"/><circle cx="44.0" cy="73.8" r="1.21" fill="#d4a23a"/><circle cx="93.1" cy="123.7" r="1.11" fill="#d4a23a"/><circle cx="47.3" cy="74.9" r="1.36" fill="#d4a23a"/><circle cx="56.3" cy="78.2" r="0.97" fill="#c8962e"/><circle cx="86.1" cy="98.2" r="1.60" fill="#c8962e"/><circle cx="59.0" cy="80.3" r="0.91" fill="#e0b050"/><circle cx="85.8" cy="136.3" r="1.26" fill="#c8962e"/><circle cx="95.7" cy="107.0" r="1.45" fill="#d4a23a"/><circle cx="66.1" cy="79.4" r="1.43" fill="#c8962e"/><circle cx="24.1" cy="105.8" r="1.18" fill="#e0b050"/><circle cx="27.4" cy="99.5" r="0.96" fill="#d4a23a"/><circle cx="47.2" cy="76.6" r="1.09" fill="#d4a23a"/><circle cx="85.8" cy="140.9" r="1.50" fill="#d4a23a"/><circle cx="53.3" cy="79.3" r="1.19" fill="#c8962e"/><circle cx="98.1" cy="106.0" r="1.56" fill="#d4a23a"/><circle cx="61.0" cy="79.0" r="1.27" fill="#d4a23a"/><circle cx="76.2" cy="89.3" r="0.91" fill="#c8962e"/><circle cx="49.6" cy="75.3" r="1.26" fill="#d4a23a"/><circle cx="50.4" cy="72.0" r="1.20" fill="#c8962e"/><circle cx="77.7" cy="144.9" r="1.12" fill="#d4a23a"/><circle cx="39.2" cy="86.0" r="1.39" fill="#e0b050"/><circle cx="108.3" cy="111.5" r="0.91" fill="#e0b050"/><circle cx="97.2" cy="115.8" r="0.96" fill="#c8962e"/><circle cx="19.7" cy="105.5" r="1.07" fill="#c8962e"/><circle cx="58.2" cy="74.8" r="1.15" fill="#c8962e"/><circle cx="25.3" cy="98.1" r="1.58" fill="#c8962e"/><circle cx="58.4" cy="75.3" r="1.10" fill="#e0b050"/><circle cx="75.6" cy="88.9" r="0.96" fill="#c8962e"/><circle cx="93.2" cy="122.1" r="1.34" fill="#d4a23a"/><circle cx="87.1" cy="128.3" r="1.36" fill="#e0b050"/><circle cx="26.6" cy="101.1" r="1.40" fill="#c8962e"/><circle cx="91.3" cy="95.7" r="1.48" fill="#e0b050"/><circle cx="82.2" cy="137.8" r="1.00" fill="#e0b050"/><circle cx="28.3" cy="99.4" r="0.91" fill="#e0b050"/><circle cx="79.6" cy="145.1" r="1.39" fill="#d4a23a"/><circle cx="51.5" cy="76.0" r="1.16" fill="#c8962e"/><circle cx="85.8" cy="132.9" r="1.38" fill="#c8962e"/><circle cx="73.2" cy="91.7" r="1.53" fill="#d4a23a"/><circle cx="97.4" cy="107.0" r="1.08" fill="#d4a23a"/><circle cx="43.8" cy="79.6" r="1.06" fill="#e0b050"/><circle cx="28.8" cy="95.0" r="1.24" fill="#e0b050"/><circle cx="51.8" cy="70.9" r="1.32" fill="#c8962e"/><circle cx="90.9" cy="100.1" r="0.91" fill="#d4a23a"/><circle cx="81.9" cy="148.7" r="1.05" fill="#c8962e"/><circle cx="78.4" cy="90.7" r="0.98" fill="#e0b050"/><circle cx="107.4" cy="105.3" r="1.22" fill="#e0b050"/><circle cx="30.1" cy="92.4" r="1.05" fill="#d4a23a"/><circle cx="54.8" cy="73.0" r="1.15" fill="#e0b050"/><circle cx="31.6" cy="95.9" r="1.39" fill="#d4a23a"/><circle cx="82.0" cy="144.3" r="1.01" fill="#c8962e"/><circle cx="90.0" cy="122.6" r="1.19" fill="#c8962e"/><circle cx="95.2" cy="105.1" r="1.49" fill="#d4a23a"/><circle cx="40.4" cy="77.3" r="1.42" fill="#c8962e"/><circle cx="73.6" cy="86.9" r="1.15" fill="#c8962e"/><circle cx="10.9" cy="116.4" r="0.94" fill="#e0b050"/><circle cx="101.9" cy="105.4" r="1.26" fill="#d4a23a"/><circle cx="15.2" cy="112.3" r="0.92" fill="#e0b050"/><circle cx="99.7" cy="102.7" r="0.96" fill="#e0b050"/><circle cx="82.7" cy="97.3" r="1.24" fill="#e0b050"/><circle cx="75.3" cy="87.9" r="1.42" fill="#e0b050"/><circle cx="85.8" cy="96.7" r="1.18" fill="#d4a23a"/><circle cx="98.8" cy="107.5" r="1.47" fill="#e0b050"/><circle cx="103.5" cy="105.6" r="1.00" fill="#d4a23a"/><circle cx="58.9" cy="76.6" r="1.16" fill="#e0b050"/><circle cx="51.3" cy="71.1" r="1.42" fill="#d4a23a"/><circle cx="66.2" cy="82.6" r="1.58" fill="#d4a23a"/><circle cx="86.8" cy="128.3" r="1.49" fill="#d4a23a"/><circle cx="62.5" cy="80.3" r="1.57" fill="#d4a23a"/><circle cx="74.4" cy="89.6" r="1.58" fill="#c8962e"/><circle cx="73.2" cy="88.5" r="1.50" fill="#c8962e"/><circle cx="53.3" cy="75.5" r="1.38" fill="#e0b050"/><circle cx="79.1" cy="142.9" r="0.96" fill="#d4a23a"/>
</g><text x="36" y="122" transform="rotate(22 36 122)" font-family="Liberation Serif" font-style="italic" font-weight="bold" font-size="10" fill="#333">Cocktails</text>
</svg></div>
<div class="a" style="left:22px;top:771px;width:218.5px;height:6px;border-radius:4px 4px 0 0;background:#a9bedc"></div>
<div class="a" style="left:254.3px;top:771px;width:218.5px;height:6px;border-radius:4px 4px 0 0;background:#f5e0e0"></div>
<div class="a" style="left:486.8px;top:771px;width:218.5px;height:6px;border-radius:4px 4px 0 0;background:linear-gradient(90deg,#e2e2e2,#d4d4d4 45%,#bcbcbc 68%,#c6c6c6 85%,#cecece)"></div>
<div class="a" style="left:0;top:777px;width:718px;height:71px;background:#1d1d1d"></div>
<!-- search bar -->
<div class="a" style="left:22px;top:786px;width:683px;height:50px;background:#303030;border-radius:4px"></div>
<svg class="a" style="left:190px;top:800px" width="20" height="20" viewBox="0 0 20 20"><circle cx="12" cy="9.1" r="5.6" fill="none" stroke="#8e8e8e" stroke-width="1.9"/><path d="M7.9 13.3L3.4 17.7" stroke="#8e8e8e" stroke-width="2.2" stroke-linecap="round"/></svg>
<div class="a" style="left:217px;top:825px;width:258px;height:1px;background:#474747"></div>
<div class="a" style="left:483px;top:796px;width:46px;height:30px;border:2px solid #a5a5a5;border-radius:15px"></div>
<!-- scrollbar -->
<div class="a" style="left:719px;top:70.5px;width:4.6px;height:702.5px;background:#2f2f2f;border-radius:3px"></div>
<div class="a" style="left:719px;top:70.5px;width:4.6px;height:98.5px;background:#565656;border-radius:3px"></div>


<!-- right panel -->
<div class="a" style="left:728px;top:67px;width:296px;height:781px;background:#323232"></div>
<div class="a" style="left:0;top:66px;width:1024px;height:1px;background:#1c1c1c"></div>
<div class="in" style="left:747px;top:166px;width:105px;height:30px"><div class="sp" style="width:22px"><svg width="22" height="28" viewBox="0 0 22 28"><path d="M6.4 9.3L10.2 5.4L14 9.3M6.4 19.6L10.2 23.5L14 19.6" fill="none" stroke="#b4b4b4" stroke-width="1.35"/></svg></div></div>
<div class="in" style="left:871px;top:166px;width:131px"><svg class="a" style="left:109px;top:11px" width="11" height="7" viewBox="0 0 11 7"><path d="M0.8 0.8L5.5 5.5L10.2 0.8" fill="none" stroke="#a8a8a8" stroke-width="1.5"/></svg></div>
<div class="in" style="left:747px;top:224px;width:105px;height:30px"><div class="sp" style="width:22px"><svg width="22" height="28" viewBox="0 0 22 28"><path d="M6.4 9.3L10.2 5.4L14 9.3M6.4 19.6L10.2 23.5L14 19.6" fill="none" stroke="#b4b4b4" stroke-width="1.35"/></svg></div></div>
<div class="in" style="left:747px;top:284px;width:105px;height:30px"></div>
<div class="in" style="left:747px;top:343px;width:105px;height:30px"></div>
<div class="in" style="left:747px;top:412px;width:89px;height:30px"><div class="sp" style="width:22px"><svg width="22" height="28" viewBox="0 0 22 28"><path d="M6.4 9.3L10.2 5.4L14 9.3M6.4 19.6L10.2 23.5L14 19.6" fill="none" stroke="#b4b4b4" stroke-width="1.35"/></svg></div></div>
<div class="in" style="left:870px;top:412px;width:88px;height:30px"><div class="sp" style="width:22px"><svg width="22" height="28" viewBox="0 0 22 28"><path d="M6.4 9.3L10.2 5.4L14 9.3M6.4 19.6L10.2 23.5L14 19.6" fill="none" stroke="#b4b4b4" stroke-width="1.35"/></svg></div></div>
<div class="in" style="left:747px;top:557px;width:81px;height:30px"><div class="sp" style="width:22px"><svg width="22" height="28" viewBox="0 0 22 28"><path d="M6.4 9.3L10.2 5.4L14 9.3M6.4 19.6L10.2 23.5L14 19.6" fill="none" stroke="#b4b4b4" stroke-width="1.35"/></svg></div></div>
<div class="in" style="left:871px;top:557px;width:79px;height:30px"><div class="sp" style="width:22px"><svg width="22" height="28" viewBox="0 0 22 28"><path d="M6.4 9.3L10.2 5.4L14 9.3M6.4 19.6L10.2 23.5L14 19.6" fill="none" stroke="#b4b4b4" stroke-width="1.35"/></svg></div></div>
<div class="in" style="left:747px;top:609px;width:81px;height:30px"><div class="sp" style="width:22px"><svg width="22" height="28" viewBox="0 0 22 28"><path d="M6.4 9.3L10.2 5.4L14 9.3M6.4 19.6L10.2 23.5L14 19.6" fill="none" stroke="#b4b4b4" stroke-width="1.35"/></svg></div></div>
<div class="in" style="left:871px;top:609px;width:79px;height:30px"><div class="sp" style="width:22px"><svg width="22" height="28" viewBox="0 0 22 28"><path d="M6.4 9.3L10.2 5.4L14 9.3M6.4 19.6L10.2 23.5L14 19.6" fill="none" stroke="#b4b4b4" stroke-width="1.35"/></svg></div></div>
<div class="in" style="left:747px;top:688px;width:81px;height:30px"><div class="sp" style="width:22px"><svg width="22" height="28" viewBox="0 0 22 28"><path d="M6.4 9.3L10.2 5.4L14 9.3M6.4 19.6L10.2 23.5L14 19.6" fill="none" stroke="#b4b4b4" stroke-width="1.35"/></svg></div></div>
<div class="in" style="left:871px;top:688px;width:79px;height:30px"><div class="sp" style="width:22px"><svg width="22" height="28" viewBox="0 0 22 28"><path d="M6.4 9.3L10.2 5.4L14 9.3M6.4 19.6L10.2 23.5L14 19.6" fill="none" stroke="#b4b4b4" stroke-width="1.35"/></svg></div></div>
<div class="in" style="left:747px;top:740px;width:81px;height:30px"><div class="sp" style="width:22px"><svg width="22" height="28" viewBox="0 0 22 28"><path d="M6.4 9.3L10.2 5.4L14 9.3M6.4 19.6L10.2 23.5L14 19.6" fill="none" stroke="#b4b4b4" stroke-width="1.35"/></svg></div></div>
<div class="in" style="left:871px;top:740px;width:79px;height:30px"><div class="sp" style="width:22px"><svg width="22" height="28" viewBox="0 0 22 28"><path d="M6.4 9.3L10.2 5.4L14 9.3M6.4 19.6L10.2 23.5L14 19.6" fill="none" stroke="#b4b4b4" stroke-width="1.35"/></svg></div></div>
<svg class="a" style="left:872px;top:226px" width="22" height="27" viewBox="0 0 22 27"><rect x="1.1" y="1.1" width="19.8" height="24.8" fill="none" stroke="#3d9bf8" stroke-width="2.2"/><circle cx="10.7" cy="7" r="2.4" fill="#3d9bf8"/><path d="M5.6 12.5Q5.6 10.5 7.6 10.5H13.6Q15.6 10.5 15.6 12.5V18.7H14V26H7.2V18.7H5.6Z" fill="#3d9bf8"/></svg>
<svg class="a" style="left:911px;top:228px" width="27" height="22" viewBox="0 0 27 22"><rect x="1" y="1" width="25" height="20" fill="none" stroke="#7d7d7d" stroke-width="2"/><circle cx="13.5" cy="6.1" r="2.4" fill="#7d7d7d"/><path d="M8.8 11.5Q8.8 9.6 10.8 9.6H16.2Q18.2 9.6 18.2 11.5V21H8.8Z" fill="#7d7d7d"/></svg>
<div class="cb" style="left:871px;top:287px"></div>
<div class="cb" style="left:871px;top:346px"></div>
<div class="cb" style="left:749px;top:806px"></div>
<div class="a" style="left:748px;top:137px;width:221px;height:1px;background:#4a4a4a"></div>
<div class="hr" style="top:383px"></div>
<div class="hr" style="top:452px"></div>
<div class="hr" style="top:485px"></div>
<svg class="a" style="left:976px;top:113px" width="23" height="17" viewBox="0 0 23 17"><path d="M11.6 1.4H13.6V6.6H16.5L12.6 10.3L8.7 6.6H11.6Z" fill="#a9a9a9"/><path d="M2.3 9.1H9.4L12.6 12L15.8 9.1H20.7Q21.7 9.1 21.7 10.1V15Q21.7 16 20.7 16H2.3Q1.3 16 1.3 15V10.1Q1.3 9.1 2.3 9.1Z" fill="#a9a9a9"/><circle cx="3.8" cy="11.6" r="1" fill="#323232"/></svg>
<svg class="a" style="left:749px;top:467px" width="8" height="11" viewBox="0 0 8 11"><path d="M1.8 1.2L6 5.5L1.8 9.8" fill="none" stroke="#c0c0c0" stroke-width="1.6"/></svg>
<svg class="a" style="left:747px;top:501px" width="11" height="8" viewBox="0 0 11 8"><path d="M1.2 1.8L5.5 6L9.8 1.8" fill="none" stroke="#c0c0c0" stroke-width="1.6"/></svg>
<div class="in" style="left:971px;top:582px;width:31px;height:31px"></div>
<svg class="a" style="left:971px;top:582px" width="31" height="31" viewBox="971 582 31 31"><g fill="none" stroke="#cacaca" stroke-width="1.9"><rect x="-4.2" y="-2.7" width="8.4" height="5.4" rx="2.7" transform="translate(984 599.3) rotate(-52)"/><rect x="-4.2" y="-2.7" width="8.4" height="5.4" rx="2.7" transform="translate(989.8 595) rotate(-52)"/></g></svg>
<svg class="a" style="left:970px;top:712px" width="30" height="30" viewBox="0 0 30 30"><g fill="none" stroke="#c8c8c8" stroke-width="1.9" stroke-linecap="round"><path d="M13.4 15.6L11.46 17.54A2.87 2.87 0 0 0 15.36 21.74L17.3 19.8"/><path d="M16.3 13.1L18.24 11.16A2.55 2.55 0 0 1 21.94 14.66L20 16.6"/></g><g stroke="#a4a4a4" stroke-width="1.3" stroke-linecap="round"><path d="M11.7 11L13.2 12.9M14.3 9.9V11.2M10.6 13.6H10.7M20.6 19.9L22.2 21.1M22.6 18.4H23.5M19.1 22.1V22.2"/></g></svg>
<div class="a" style="left:860px;top:798px;width:63.5px;height:31px;border:2px solid #c8c8c8;border-radius:15.5px"></div>
<div class="a" style="left:928px;top:798px;width:70px;height:31px;background:#1473e6;border-radius:15.5px"></div>
<div class="t" style="left:466.50px;top:4px;font-size:13px;line-height:13px;color:#b0b0b0;-webkit-text-stroke:0.2px #b0b0b0">New Document</div>
<div class="t" style="left:278.39px;top:37px;font-size:14px;line-height:14px;color:#b3b3b3;-webkit-text-stroke:0.2px #b3b3b3;transform:scaleX(0.909)">Recent</div>
<div class="t" style="left:394.90px;top:37px;font-size:14px;line-height:14px;color:#b3b3b3;-webkit-text-stroke:0.2px #b3b3b3;transform:scaleX(0.905)">Saved</div>
<div class="t" style="left:524.50px;top:37px;font-size:14px;line-height:14px;color:#ffffff;font-weight:bold;transform:scaleX(0.841)">Print</div>
<div class="t" style="left:628.30px;top:37px;font-size:14px;line-height:14px;color:#b3b3b3;-webkit-text-stroke:0.2px #b3b3b3;transform:scaleX(0.897)">Web</div>
<div class="t" style="left:729.50px;top:37px;font-size:14px;line-height:14px;color:#b3b3b3;-webkit-text-stroke:0.2px #b3b3b3">Mobile</div>
<div class="t" style="left:22.20px;top:87px;font-size:11px;line-height:11px;color:#d2d2d2;font-weight:bold;transform:scaleX(0.931)">BLANK DOCUMENT PRESETS</div>
<div class="t" style="left:178.50px;top:87px;font-size:11px;line-height:11px;color:#a8a8a8;-webkit-text-stroke:0.2px #a8a8a8;transform:scaleX(0.802)">(11)</div>
<div class="t" style="left:89.00px;top:224px;font-size:11.5px;line-height:11.5px;color:#f4f4f4;font-weight:bold;transform:scaleX(0.838)">Letter</div>
<div class="t" style="left:74.50px;top:239px;font-size:11px;line-height:11px;color:#b0b0b0;-webkit-text-stroke:0.2px #b0b0b0;transform:scaleX(0.923)">51p0 x 66p0</div>
<div class="t" style="left:263.70px;top:224px;font-size:11.5px;line-height:11.5px;color:#f4f4f4;font-weight:bold;transform:scaleX(0.818)">Legal</div>
<div class="t" style="left:248.00px;top:239px;font-size:11px;line-height:11px;color:#b0b0b0;-webkit-text-stroke:0.2px #b0b0b0;transform:scaleX(0.913)">51p0 x 84p0</div>
<div class="t" style="left:432.00px;top:224px;font-size:11.5px;line-height:11.5px;color:#f4f4f4;font-weight:bold;transform:scaleX(0.837)">Tabloid</div>
<div class="t" style="left:418.00px;top:239px;font-size:11px;line-height:11px;color:#b0b0b0;-webkit-text-stroke:0.2px #b0b0b0;transform:scaleX(0.924)">66p0 x 102p0</div>
<div class="t" style="left:594.90px;top:224px;font-size:11.5px;line-height:11.5px;color:#f4f4f4;font-weight:bold;transform:scaleX(0.860)">Letter - Half</div>
<div class="t" style="left:594.90px;top:239px;font-size:11px;line-height:11px;color:#b0b0b0;-webkit-text-stroke:0.2px #b0b0b0;transform:scaleX(0.902)">33p0 x 51p0</div>
<div class="t" style="left:315.00px;top:282px;font-size:12px;line-height:12px;color:#ffffff;font-weight:bold;transform:scaleX(0.870)">View All Presets</div>
<div class="t" style="left:22.20px;top:317px;font-size:11px;line-height:11px;color:#d2d2d2;font-weight:bold;transform:scaleX(0.923)">TEMPLATES</div>
<div class="t" style="left:90.70px;top:317px;font-size:11px;line-height:11px;color:#a8a8a8;-webkit-text-stroke:0.2px #a8a8a8;transform:scaleX(1.005)">(63)</div>
<div class="t" style="left:36.80px;top:515px;font-size:11.5px;line-height:11.5px;color:#e4e4e4;-webkit-text-stroke:0.2px #e4e4e4;transform:scaleX(0.887)">Fun Postcard Layout</div>
<div class="t" style="left:202.40px;top:515px;font-size:11px;line-height:11px;color:#a0a0a0;-webkit-text-stroke:0.2px #a0a0a0;transform:scaleX(0.797)">FREE</div>
<div class="t" style="left:269.30px;top:515px;font-size:11.5px;line-height:11.5px;color:#e4e4e4;-webkit-text-stroke:0.2px #e4e4e4;transform:scaleX(0.923)">Minimal Brochure Layout</div>
<div class="t" style="left:435.10px;top:515px;font-size:11px;line-height:11px;color:#a0a0a0;-webkit-text-stroke:0.2px #a0a0a0;transform:scaleX(0.803)">FREE</div>
<div class="t" style="left:500.89px;top:515px;font-size:11.5px;line-height:11.5px;color:#e4e4e4;-webkit-text-stroke:0.2px #e4e4e4;transform:scaleX(0.913)">Indie Zine Layout</div>
<div class="t" style="left:667.60px;top:515px;font-size:11px;line-height:11px;color:#a0a0a0;-webkit-text-stroke:0.2px #a0a0a0;transform:scaleX(0.803)">FREE</div>
<div class="t" style="left:36.20px;top:728px;font-size:11.5px;line-height:11.5px;color:#e4e4e4;-webkit-text-stroke:0.2px #e4e4e4;transform:scaleX(0.903)">Simple Magazine Layout</div>
<div class="t" style="left:202.20px;top:728px;font-size:11px;line-height:11px;color:#a0a0a0;-webkit-text-stroke:0.2px #a0a0a0;transform:scaleX(0.817)">FREE</div>
<div class="t" style="left:269.00px;top:728px;font-size:11.5px;line-height:11.5px;color:#e4e4e4;-webkit-text-stroke:0.2px #e4e4e4;transform:scaleX(0.913)">Modern Studio Book Layout</div>
<div class="t" style="left:434.50px;top:728px;font-size:11px;line-height:11px;color:#a0a0a0;-webkit-text-stroke:0.2px #a0a0a0;transform:scaleX(0.824)">FREE</div>
<div class="t" style="left:501.50px;top:728px;font-size:11.5px;line-height:11.5px;color:#e4e4e4;-webkit-text-stroke:0.2px #e4e4e4;transform:scaleX(0.912)">Confetti Invitation Set</div>
<div class="t" style="left:667.30px;top:728px;font-size:11px;line-height:11px;color:#a0a0a0;-webkit-text-stroke:0.2px #a0a0a0;transform:scaleX(0.817)">FREE</div>
<div class="t" style="left:217.80px;top:804px;font-size:14px;line-height:14px;color:#828282;-webkit-text-stroke:0.01px #828282;font-style:italic;transform:scaleX(0.885)">Find more templates on Adobe Stock</div>
<div class="t" style="left:497.70px;top:804px;font-size:14.5px;line-height:14.5px;color:#cfcfcf;font-weight:bold;transform:scaleX(0.809)">Go</div>
<div class="t" style="left:747.80px;top:87px;font-size:11px;line-height:11px;color:#a4a4a4;-webkit-text-stroke:0.2px #a4a4a4;transform:scaleX(0.848)">PRESET DETAILS</div>
<div class="t" style="left:748.18px;top:112px;font-size:21px;line-height:21px;color:#f2f2f2;-webkit-text-stroke:0.2px #f2f2f2;transform:scaleX(0.823)">Untitled-1</div>
<div class="t" style="left:747.80px;top:150px;font-size:11.5px;line-height:11.5px;color:#b4b4b4;-webkit-text-stroke:0.25px #b4b4b4;transform:scaleX(0.945)">Width</div>
<div class="t" style="left:871.40px;top:150px;font-size:11.5px;line-height:11.5px;color:#b4b4b4;-webkit-text-stroke:0.25px #b4b4b4;transform:scaleX(0.907)">Units</div>
<div class="t" style="left:747.80px;top:208px;font-size:11.5px;line-height:11.5px;color:#b4b4b4;-webkit-text-stroke:0.25px #b4b4b4;transform:scaleX(0.887)">Height</div>
<div class="t" style="left:871.40px;top:208px;font-size:11.5px;line-height:11.5px;color:#b4b4b4;-webkit-text-stroke:0.25px #b4b4b4;transform:scaleX(0.936)">Orientation</div>
<div class="t" style="left:747.80px;top:269px;font-size:11.5px;line-height:11.5px;color:#b4b4b4;-webkit-text-stroke:0.25px #b4b4b4;transform:scaleX(0.797)">Pages</div>
<div class="t" style="left:871.30px;top:269px;font-size:11.5px;line-height:11.5px;color:#b4b4b4;-webkit-text-stroke:0.25px #b4b4b4;transform:scaleX(0.833)">Facing Pages</div>
<div class="t" style="left:747.20px;top:327px;font-size:11.5px;line-height:11.5px;color:#b4b4b4;-webkit-text-stroke:0.25px #b4b4b4;transform:scaleX(0.876)">Start #</div>
<div class="t" style="left:871.30px;top:327px;font-size:11.5px;line-height:11.5px;color:#b4b4b4;-webkit-text-stroke:0.25px #b4b4b4;transform:scaleX(0.908)">Primary Text Frame</div>
<div class="t" style="left:747.80px;top:396px;font-size:11.5px;line-height:11.5px;color:#b4b4b4;-webkit-text-stroke:0.25px #b4b4b4;transform:scaleX(0.901)">Columns</div>
<div class="t" style="left:871.30px;top:396px;font-size:11.5px;line-height:11.5px;color:#b4b4b4;-webkit-text-stroke:0.25px #b4b4b4;transform:scaleX(0.922)">Column Gutter</div>
<div class="t" style="left:747.80px;top:522px;font-size:11.5px;line-height:11.5px;color:#b4b4b4;-webkit-text-stroke:0.25px #b4b4b4;transform:scaleX(0.889)">Bleed</div>
<div class="t" style="left:747.80px;top:544px;font-size:11.5px;line-height:11.5px;color:#b4b4b4;-webkit-text-stroke:0.25px #b4b4b4;transform:scaleX(0.920)">Top</div>
<div class="t" style="left:871.30px;top:544px;font-size:11.5px;line-height:11.5px;color:#b4b4b4;-webkit-text-stroke:0.25px #b4b4b4;transform:scaleX(0.943)">Bottom</div>
<div class="t" style="left:747.80px;top:595px;font-size:11.5px;line-height:11.5px;color:#b4b4b4;-webkit-text-stroke:0.25px #b4b4b4;transform:scaleX(0.861)">Left</div>
<div class="t" style="left:871.30px;top:595px;font-size:11.5px;line-height:11.5px;color:#b4b4b4;-webkit-text-stroke:0.25px #b4b4b4;transform:scaleX(0.839)">Right</div>
<div class="t" style="left:747.80px;top:653px;font-size:11.5px;line-height:11.5px;color:#b4b4b4;-webkit-text-stroke:0.25px #b4b4b4;transform:scaleX(0.862)">Slug</div>
<div class="t" style="left:747.80px;top:674px;font-size:11.5px;line-height:11.5px;color:#b4b4b4;-webkit-text-stroke:0.25px #b4b4b4;transform:scaleX(0.920)">Top</div>
<div class="t" style="left:871.30px;top:674px;font-size:11.5px;line-height:11.5px;color:#b4b4b4;-webkit-text-stroke:0.25px #b4b4b4;transform:scaleX(0.943)">Bottom</div>
<div class="t" style="left:747.80px;top:726px;font-size:11.5px;line-height:11.5px;color:#b4b4b4;-webkit-text-stroke:0.25px #b4b4b4;transform:scaleX(0.861)">Left</div>
<div class="t" style="left:871.30px;top:726px;font-size:11.5px;line-height:11.5px;color:#b4b4b4;-webkit-text-stroke:0.25px #b4b4b4;transform:scaleX(0.839)">Right</div>
<div class="t" style="left:759.85px;top:465px;font-size:13px;line-height:13px;color:#c4c4c4;-webkit-text-stroke:0.2px #c4c4c4;transform:scaleX(0.855)">Margins</div>
<div class="t" style="left:759.85px;top:499px;font-size:13px;line-height:13px;color:#c4c4c4;-webkit-text-stroke:0.2px #c4c4c4;transform:scaleX(0.845)">Bleed and Slug</div>
<div class="t" style="left:777.70px;top:175px;font-size:14px;line-height:14px;color:#f2f2f2;-webkit-text-stroke:0.45px #f2f2f2;transform:scaleX(0.960)">30p0</div>
<div class="t" style="left:778.00px;top:233px;font-size:14px;line-height:14px;color:#f2f2f2;-webkit-text-stroke:0.45px #f2f2f2;transform:scaleX(0.957)">30p0</div>
<div class="t" style="left:881.87px;top:174px;font-size:14px;line-height:14px;color:#f2f2f2;-webkit-text-stroke:0.45px #f2f2f2;transform:scaleX(0.827)">Picas</div>
<div class="t" style="left:756.40px;top:294px;font-size:14px;line-height:14px;color:#f2f2f2;-webkit-text-stroke:0.45px #f2f2f2;transform:scaleX(0.919)">7</div>
<div class="t" style="left:756.70px;top:352px;font-size:14px;line-height:14px;color:#f2f2f2;-webkit-text-stroke:0.45px #f2f2f2;transform:scaleX(0.600)">1</div>
<div class="t" style="left:776.80px;top:421px;font-size:14px;line-height:14px;color:#f2f2f2;-webkit-text-stroke:0.45px #f2f2f2;transform:scaleX(0.600)">1</div>
<div class="t" style="left:899.11px;top:421px;font-size:14px;line-height:14px;color:#f2f2f2;-webkit-text-stroke:0.45px #f2f2f2;transform:scaleX(0.886)">1p0</div>
<div class="t" style="left:778.20px;top:566px;font-size:14px;line-height:14px;color:#f2f2f2;-webkit-text-stroke:0.45px #f2f2f2;transform:scaleX(0.938)">0p9</div>
<div class="t" style="left:901.40px;top:566px;font-size:14px;line-height:14px;color:#f2f2f2;-webkit-text-stroke:0.45px #f2f2f2;transform:scaleX(0.925)">0p9</div>
<div class="t" style="left:778.20px;top:618px;font-size:14px;line-height:14px;color:#f2f2f2;-webkit-text-stroke:0.45px #f2f2f2;transform:scaleX(0.938)">0p9</div>
<div class="t" style="left:901.40px;top:618px;font-size:14px;line-height:14px;color:#f2f2f2;-webkit-text-stroke:0.45px #f2f2f2;transform:scaleX(0.925)">0p9</div>
<div class="t" style="left:778.20px;top:698px;font-size:14px;line-height:14px;color:#f2f2f2;-webkit-text-stroke:0.45px #f2f2f2;transform:scaleX(0.938)">0p0</div>
<div class="t" style="left:901.40px;top:698px;font-size:14px;line-height:14px;color:#f2f2f2;-webkit-text-stroke:0.45px #f2f2f2;transform:scaleX(0.925)">0p0</div>
<div class="t" style="left:778.20px;top:749px;font-size:14px;line-height:14px;color:#f2f2f2;-webkit-text-stroke:0.45px #f2f2f2;transform:scaleX(0.938)">0p0</div>
<div class="t" style="left:901.40px;top:749px;font-size:14px;line-height:14px;color:#f2f2f2;-webkit-text-stroke:0.45px #f2f2f2;transform:scaleX(0.925)">0p0</div>
<div class="t" style="left:771.60px;top:809px;font-size:11.5px;line-height:11.5px;color:#c8c8c8;-webkit-text-stroke:0.2px #c8c8c8;transform:scaleX(0.885)">Preview</div>
<div class="t" style="left:875.60px;top:807px;font-size:13.5px;line-height:13.5px;color:#d4d4d4;font-weight:bold;transform:scaleX(0.870)">Close</div>
<div class="t" style="left:943.90px;top:807px;font-size:13.5px;line-height:13.5px;color:#ffffff;font-weight:bold;transform:scaleX(0.913)">Create</div>
</body></html>
